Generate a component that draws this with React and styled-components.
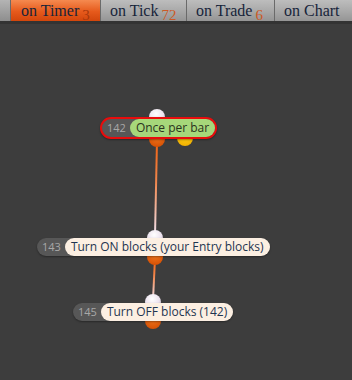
import React from 'react';
import styled, { createGlobalStyle } from 'styled-components';

const GlobalStyle = createGlobalStyle`
  html, body {
    margin: 0;
    padding: 0;
    background: #3d3d3d;
  }
`;

const tabs = [
  { name: 'on Timer', count: '3', width: 90, active: true },
  { name: 'on Tick', count: '72', width: 86 },
  { name: 'on Trade', count: '6', width: 88 },
  { name: 'on Chart', count: '', width: 78 },
];

const nodes = [
  { id: 142, label: 'Once per bar', x: 100, y: 117, variant: 'green', selected: true },
  { id: 143, label: 'Turn ON blocks (your Entry blocks)', x: 37, y: 238 },
  { id: 145, label: 'Turn OFF blocks (142)', x: 73, y: 303 },
];

function App() {
  return (
    <Page>
      <GlobalStyle />
      <TabBar>
        <Spacer />
        {tabs.map((t) => (
          <Tab key={t.name} $active={t.active} style={{ width: t.width }}>
            {t.name}
            {t.count && <Count $active={t.active}>{t.count}</Count>}
          </Tab>
        ))}
      </TabBar>
      <Canvas>
        <Wires width="352" height="356" viewBox="0 0 352 356">
          <defs>
            <linearGradient id="wire" x1="0" y1="0" x2="0" y2="1">
              <stop offset="0" stopColor="#f2600e" />
              <stop offset="0.45" stopColor="#f08850" />
              <stop offset="1" stopColor="#efe4f2" />
            </linearGradient>
            <radialGradient id="inPort" cx="0.45" cy="0.3" r="0.75">
              <stop offset="0" stopColor="#ffffff" />
              <stop offset="0.6" stopColor="#ece2ee" />
              <stop offset="1" stopColor="#b8a8bc" />
            </radialGradient>
            <radialGradient id="outPort" cx="0.5" cy="0.3" r="0.75">
              <stop offset="0" stopColor="#f27a22" />
              <stop offset="1" stopColor="#d44e02" />
            </radialGradient>
            <radialGradient id="yellowPort" cx="0.5" cy="0.3" r="0.75">
              <stop offset="0" stopColor="#ffd21a" />
              <stop offset="1" stopColor="#f0ae00" />
            </radialGradient>
          </defs>
          <path d="M157 116 L155 212" stroke="url(#wire)" strokeWidth="2" fill="none" />
          <path d="M155 234 L153 276" stroke="url(#wire)" strokeWidth="2" fill="none" />

          <circle cx="157" cy="93" r="8" fill="url(#inPort)" />
          <circle cx="157" cy="115" r="8" fill="url(#outPort)" />
          <circle cx="185" cy="114" r="8" fill="url(#yellowPort)" />

          <circle cx="155" cy="214" r="8" fill="url(#inPort)" />
          <circle cx="155" cy="233" r="8" fill="url(#outPort)" />

          <circle cx="153" cy="278" r="8" fill="url(#inPort)" />
          <circle cx="153" cy="297" r="8" fill="url(#outPort)" />
        </Wires>
        {nodes.map((n) => (
          <Node key={n.id} $selected={n.selected} style={{ left: n.x, top: n.y - 24 }}>
            <NodeId>{n.id}</NodeId>
            <Label $variant={n.variant}>{n.label}</Label>
          </Node>
        ))}
      </Canvas>
    </Page>
  );
}

export default App;

const Page = styled.div`
  width: 352px;
  height: 380px;
  background: #3d3d3d;
  overflow: hidden;
`;

const TabBar = styled.div`
  display: flex;
  height: 21px;
  background: linear-gradient(#b4b4b4, #8e8e8e);
  border-bottom: 3px solid #333;
`;

const Spacer = styled.div`
  width: 10px;
  flex-shrink: 0;
`;

const Tab = styled.div`
  flex-shrink: 0;
  box-sizing: border-box;
  height: 21px;
  padding-left: ${(p) => (p.$active ? '10px' : '9px')};
  border-left: 1px solid #6a6a6a;
  background: ${(p) =>
    p.$active
      ? 'linear-gradient(#f58a50, #e65a1c 55%, #d2460c)'
      : 'linear-gradient(#bdbdbd, #a8a8a8 55%, #959595)'};
  font-family: 'Liberation Serif', serif;
  font-size: 16px;
  line-height: 21px;
  color: #17243a;
  white-space: nowrap;
`;

const Count = styled.span`
  margin-left: 3px;
  font-size: 15px;
  position: relative;
  top: 4px;
  line-height: 0;
  color: ${(p) => (p.$active ? '#a8380c' : '#cc5a26')};
`;

const Canvas = styled.div`
  position: relative;
  height: 356px;
`;

const Wires = styled.svg`
  position: absolute;
  left: 0;
  top: 0;
`;

const Node = styled.div`
  position: absolute;
  display: flex;
  align-items: center;
  background: #575757;
  border-radius: 11px;
  border: ${(p) => (p.$selected ? '2px solid #e80c0c' : 'none')};
  font-family: 'Open Sans', 'DejaVu Sans', sans-serif;
  white-space: nowrap;
  box-shadow: 0 1px 2px rgba(0, 0, 0, 0.35);
`;

const NodeId = styled.span`
  padding: 0 4px 0 5px;
  font-size: 11px;
  color: #a8a8a8;
  line-height: 18px;
`;

const Label = styled.span`
  height: 18px;
  line-height: 18px;
  padding: 0 6px 0 6px;
  border-radius: 9px;
  font-size: 12px;
  background: ${(p) => (p.$variant === 'green' ? '#a6d77a' : '#fcefe2')};
  color: ${(p) => (p.$variant === 'green' ? '#2a3320' : '#1f3550')};
`;
